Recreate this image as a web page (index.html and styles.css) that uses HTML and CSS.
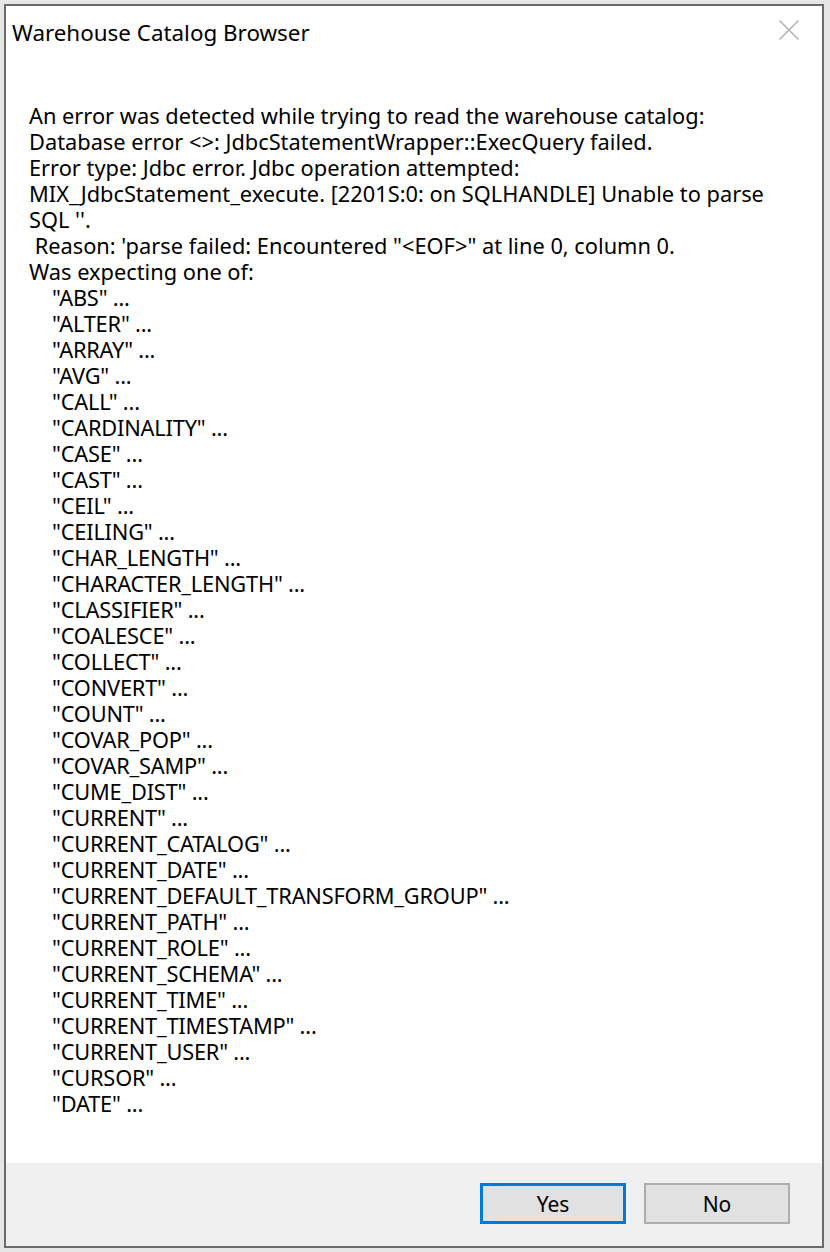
FILE: index.html
```html
<!DOCTYPE html>
<html>
<head>
<meta charset="utf-8">
<title>Warehouse Catalog Browser</title>
<link rel="stylesheet" href="styles.css">
</head>
<body>
<div class="window">
  <div class="titlebar">
    <span class="title">Warehouse Catalog Browser</span>
    <span class="close" aria-label="Close">
      <svg width="20" height="20" viewBox="0 0 20 20"><path d="M0.5 0.5 L19.5 19.5 M19.5 0.5 L0.5 19.5" stroke="#a9a9a9" stroke-width="1.2" fill="none"/></svg>
    </span>
  </div>
  <div class="content">
    <div class="msg">
      <div class="line">An error was detected while trying to read the warehouse catalog:</div>
      <div class="line">Database error &lt;&gt;: JdbcStatementWrapper::ExecQuery failed.</div>
      <div class="line">Error type: Jdbc error. Jdbc operation attempted:</div>
      <div class="line">MIX_JdbcStatement_execute. [2201S:0: on SQLHANDLE] Unable to parse</div>
      <div class="line">SQL ''.</div>
      <div class="line"> Reason: 'parse failed: Encountered "&lt;EOF&gt;" at line 0, column 0.</div>
      <div class="line">Was expecting one of:</div>
      <div class="line item">"ABS" ...</div>
      <div class="line item">"ALTER" ...</div>
      <div class="line item">"ARRAY" ...</div>
      <div class="line item">"AVG" ...</div>
      <div class="line item">"CALL" ...</div>
      <div class="line item">"CARDINALITY" ...</div>
      <div class="line item">"CASE" ...</div>
      <div class="line item">"CAST" ...</div>
      <div class="line item">"CEIL" ...</div>
      <div class="line item">"CEILING" ...</div>
      <div class="line item">"CHAR_LENGTH" ...</div>
      <div class="line item">"CHARACTER_LENGTH" ...</div>
      <div class="line item">"CLASSIFIER" ...</div>
      <div class="line item">"COALESCE" ...</div>
      <div class="line item">"COLLECT" ...</div>
      <div class="line item">"CONVERT" ...</div>
      <div class="line item">"COUNT" ...</div>
      <div class="line item">"COVAR_POP" ...</div>
      <div class="line item">"COVAR_SAMP" ...</div>
      <div class="line item">"CUME_DIST" ...</div>
      <div class="line item">"CURRENT" ...</div>
      <div class="line item">"CURRENT_CATALOG" ...</div>
      <div class="line item">"CURRENT_DATE" ...</div>
      <div class="line item">"CURRENT_DEFAULT_TRANSFORM_GROUP" ...</div>
      <div class="line item">"CURRENT_PATH" ...</div>
      <div class="line item">"CURRENT_ROLE" ...</div>
      <div class="line item">"CURRENT_SCHEMA" ...</div>
      <div class="line item">"CURRENT_TIME" ...</div>
      <div class="line item">"CURRENT_TIMESTAMP" ...</div>
      <div class="line item">"CURRENT_USER" ...</div>
      <div class="line item">"CURSOR" ...</div>
      <div class="line item">"DATE" ...</div>
    </div>
  </div>
  <div class="footer">
    <button class="btn default">Yes</button>
    <button class="btn">No</button>
  </div>
</div>
</body>
</html>
```
FILE: styles.css
```css
html, body {
  margin: 0;
  padding: 0;
}
body {
  background: #e6e6e6;
  padding: 4px;
  font-family: "Noto Sans", "Open Sans", sans-serif;
  color: #000;
}
.window {
  box-sizing: border-box;
  width: 820px;
  height: 1244px;
  border: 2px solid #6b6b6b;
  background: #ffffff;
  display: flex;
  flex-direction: column;
}
.titlebar {
  height: 56px;
  display: flex;
  align-items: center;
  justify-content: space-between;
  padding: 0 23px 0 6px;
}
.title {
  font-size: 22.4px;
  line-height: 26px;
  margin-top: -3px;
}
.close {
  display: flex;
  width: 20px;
  height: 20px;
  margin-top: -8px;
}
.content {
  flex: 1;
  padding: 41px 0 0 23px;
}
.msg {
  font-size: 21.8px;
  line-height: 26px;
}
.line {
  white-space: pre;
}
.item {
  padding-left: 23px;
  letter-spacing: -0.2px;
}
.footer {
  height: 83px;
  background: #f0f0f0;
  display: flex;
  align-items: flex-start;
  justify-content: flex-end;
  gap: 18px;
  padding: 20px 32px 0 0;
  box-sizing: border-box;
}
.btn {
  box-sizing: border-box;
  width: 146px;
  height: 41px;
  background: #e1e1e1;
  border: 2px solid #adadad;
  font-family: "Noto Sans", "Open Sans", sans-serif;
  font-size: 21px;
  line-height: 26px;
  color: #000;
  padding: 0;
  margin: 0;
}
.btn.default {
  border: 3px solid #0078d7;
}
```
